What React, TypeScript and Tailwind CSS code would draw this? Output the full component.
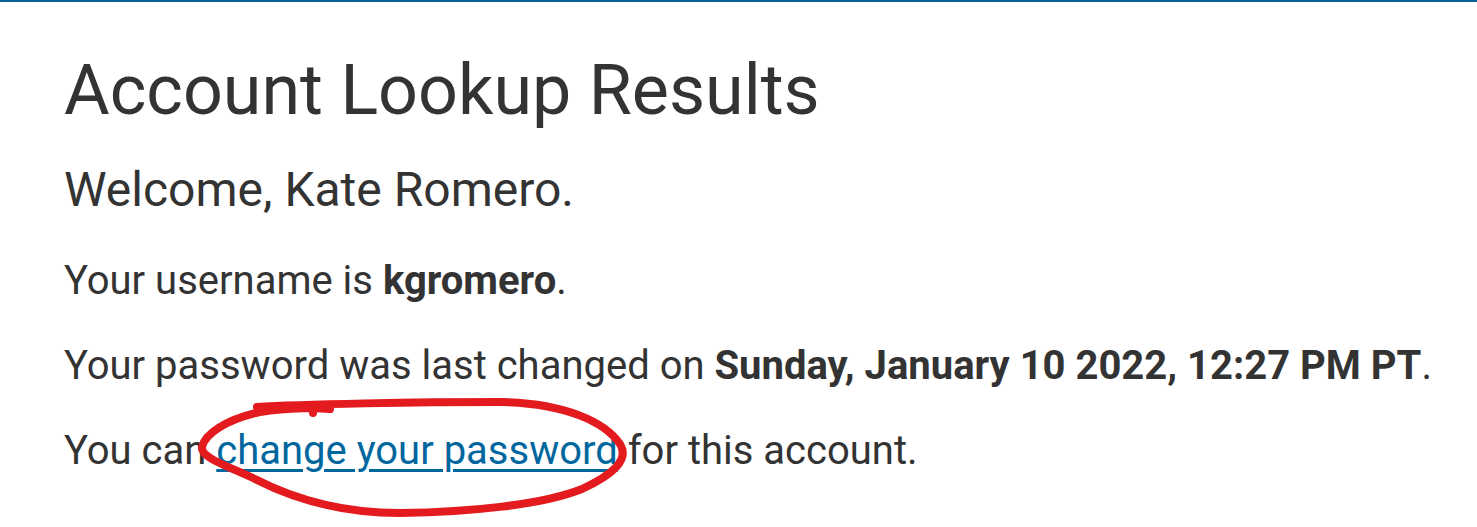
export default function App() {
  return (
    <div className="relative min-h-[527px] border-t-2 border-[#0b6196] bg-white font-['Roboto',sans-serif] text-[#333333]">
      <div className="pl-[64px] pt-[46px]">
        <h1 className="text-[70px] leading-[1.2] font-normal">Account Lookup Results</h1>
        <h2 className="mt-[29px] text-[48px] leading-[1.2] font-normal">Welcome, Kate Romero.</h2>
        <p className="mt-[38px] text-[40px] leading-[1.2]">
          Your username is <strong className="font-bold">kgromero</strong>.
        </p>
        <p className="mt-[37px] text-[40px] leading-[1.2]">
          Your password was last changed on{" "}
          <strong className="font-bold">Sunday, January 10 2022, 12:27 PM PT</strong>.
        </p>
        <p className="mt-[37px] text-[40px] leading-[1.2]">
          You can{" "}
          <a href="#" className="text-[#00679e] underline decoration-[3px] underline-offset-[5px]">
            change your password
          </a>{" "}
          for this account.
        </p>
      </div>

      {/* hand-drawn circle around the link */}
      <svg
        className="pointer-events-none absolute left-0 top-0"
        width="1477"
        height="527"
        viewBox="0 0 1477 527"
        fill="none"
      >
        <path
          d="M257 405 C300 402 420 400 500 400 C565 401 605 420 620 442 C630 458 612 473 582 487 C542 503 470 510 400 511 C340 511 290 495 255 477 C225 463 200 455 202 445 C205 432 225 418 260 410 C290 405 320 406 330 407"
          stroke="#e31b1f"
          strokeWidth="8"
          strokeLinecap="round"
          strokeLinejoin="round"
        />
        <circle cx="313" cy="411" r="4" fill="#e31b1f" />
      </svg>
    </div>
  );
}
